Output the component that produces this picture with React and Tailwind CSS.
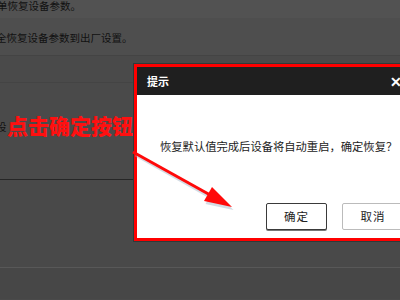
import React from 'react';

const cjk = { fontFamily: '"Noto Sans CJK SC", "Noto Sans", sans-serif' };

const Arrow = () => (
  <svg className="absolute left-0 top-0 pointer-events-none" width="400" height="300" viewBox="0 0 400 300">
    {/* soft shadow under the arrow */}
    <g transform="translate(1.5 3)" opacity="0.45">
      <line x1="134" y1="152" x2="212" y2="196" stroke="#9fb3c4" strokeWidth="3" />
      <polygon points="232,207 204,201 212,187" fill="#9fb3c4" />
    </g>
    <line x1="133" y1="152" x2="212" y2="196" stroke="#ff0a0a" strokeWidth="3" />
    <polygon points="232,207 204,201 212,187" fill="#ff0a0a" />
  </svg>
);

export default function App() {
  return (
    <div className="relative w-[400px] h-[300px] overflow-hidden bg-[#4a4a4a]" style={cjk}>
      {/* background settings page */}
      <div className="flex flex-col text-[#111] text-[10.5px]">
        <div className="h-[18px] bg-[#525252] flex items-start">
          <span className="-ml-[3px] leading-[11px]">单恢复设备参数。</span>
        </div>
        <div className="h-[38px] bg-[#4e4e4e] border-b border-[#444] flex items-center">
          <span className="-ml-[4px] leading-[12px] pt-[2px]">全恢复设备参数到出厂设置。</span>
        </div>
        <div className="h-[27px] bg-[#4a4a4a] border-b border-[#444]" />
        <div className="h-[96px] bg-[#4a4a4a] flex items-start">
          <span className="-ml-[4px] leading-[12px] mt-[38px]">设</span>
        </div>
        <div className="h-[88px] bg-[#494949] border-t border-[#262626]" />
        <div className="h-[32px] bg-[#474747] border-t border-[#585858]" />
      </div>

      {/* annotation text */}
      <div className="absolute left-[7px] top-[111px] text-[21px] leading-[28px] font-black text-[#ff1010]">
        点击确定按钮
      </div>

      {/* dialog */}
      <div className="absolute left-[134px] top-[64px] w-[280px] h-[177px] border-[3px] border-[#ff0000] bg-white flex flex-col shadow-[0_0_0_1px_#2f3a3a]">
        <div className="h-[28px] bg-[#1f1f1f] flex items-center justify-between pl-[10px] pr-[9px]">
          <span className="text-white text-[11px] font-bold leading-none">提示</span>
          <span className="text-white text-[14px] font-bold leading-none">✕</span>
        </div>
        <div className="flex-1 flex flex-col">
          <div className="pt-[45px] pl-[23px] text-[11.3px] leading-[13px] text-[#222] whitespace-nowrap">
            恢复默认值完成后设备将自动重启，确定恢复？
          </div>
          <div className="flex gap-[15px] pl-[129px] pt-[50px]">
            <button className="w-[61px] h-[27px] rounded-[2px] border border-[#3a3a3a] shadow-[0_1px_0_#777] bg-white text-[11.5px] text-[#222] tracking-[1px]">
              确定
            </button>
            <button className="w-[62px] h-[27px] rounded-[2px] border border-[#bbbbbb] bg-white text-[11.5px] text-[#222] tracking-[1px]">
              取消
            </button>
          </div>
        </div>
      </div>

      <Arrow />
    </div>
  );
}
